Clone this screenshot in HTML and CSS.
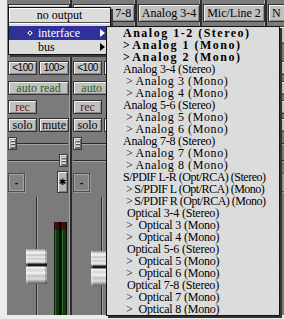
FILE: index.html
```html
<!DOCTYPE html>
<html>
<head>
<meta charset="utf-8">
<link rel="stylesheet" href="styles.css">
</head>
<body>
<div class="screen">
  <div class="mixer">
    <div class="strip">
      <div class="btn io"></div>
      <div class="btn io out"></div>
      <div class="pair"><div class="btn sm">&lt;100</div><div class="btn sm r">100&gt;</div></div>
      <div class="btn auto">auto read</div>
      <div class="btn rec">rec</div>
      <div class="pair p2"><div class="btn">solo</div><div class="btn r">mute</div></div>
      <div class="pan"><span class="knob"></span><span class="track"></span></div>
      <div class="pan pan2"><span class="track"></span><span class="knob"></span></div>
      <div class="ctl"><div class="inset">-</div><div class="star">✱</div></div>
      <div class="fader"><div class="fcol"><div class="fknob"></div></div><div class="meters"><i></i><i></i></div></div>
    </div>
    <div class="strip">
      <div class="btn io">Analog 7-8</div>
      <div class="btn io out"></div>
      <div class="pair"><div class="btn sm">&lt;100</div><div class="btn sm r"></div></div>
      <div class="btn auto">auto read</div>
      <div class="btn rec">rec</div>
      <div class="pair p2"><div class="btn">solo</div><div class="btn r"></div></div>
      <div class="pan"><span class="knob"></span><span class="track"></span></div>
      <div class="pan pan2"><span class="track"></span><span class="knob"></span></div>
      <div class="ctl"><div class="inset">-</div><div class="star"></div></div>
      <div class="fader"><div class="fcol"><div class="fknob k2"></div></div><div class="meters"><i></i><i></i></div></div>
    </div>
    <div class="strip">
      <div class="btn io">Analog 3-4</div>
      <div class="btn io out"></div>
      <div class="pair"><div class="btn sm"></div><div class="btn sm r"></div></div>
      <div class="btn auto"></div>
      <div class="btn rec"></div>
      <div class="pair p2"><div class="btn"></div><div class="btn r"></div></div>
      <div class="pan"><span class="knob"></span><span class="track"></span></div>
      <div class="pan pan2"><span class="track"></span><span class="knob"></span></div>
      <div class="ctl"><div class="inset"></div><div class="star"></div></div>
      <div class="fader"><div class="fcol"><div class="fknob"></div></div><div class="meters"><i></i><i></i></div></div>
    </div>
    <div class="strip">
      <div class="btn io">Mic/Line 2</div>
      <div class="btn io out"></div>
      <div class="pair"><div class="btn sm"></div><div class="btn sm r"></div></div>
      <div class="btn auto"></div>
      <div class="btn rec"></div>
      <div class="pair p2"><div class="btn"></div><div class="btn r"></div></div>
      <div class="pan"><span class="knob"></span><span class="track"></span></div>
      <div class="pan pan2"><span class="track"></span><span class="knob"></span></div>
      <div class="ctl"><div class="inset"></div><div class="star"></div></div>
      <div class="fader"><div class="fcol"><div class="fknob"></div></div><div class="meters"><i></i><i></i></div></div>
    </div>
    <div class="strip">
      <div class="btn io left">N</div>
      <div class="btn io out"></div>
      <div class="pair"><div class="btn sm"></div><div class="btn sm r"></div></div>
      <div class="btn auto"></div>
      <div class="btn rec"></div>
      <div class="pair p2"><div class="btn"></div><div class="btn r"></div></div>
      <div class="pan"><span class="knob"></span><span class="track"></span></div>
      <div class="pan pan2"><span class="track"></span><span class="knob"></span></div>
      <div class="ctl"><div class="inset"></div><div class="star"></div></div>
      <div class="fader"><div class="fcol"><div class="fknob"></div></div><div class="meters"><i></i><i></i></div></div>
    </div>
  </div>

  <div class="menu">
    <div class="menu-top">no output</div>
    <div class="menu-sep"></div>
    <div class="row hl"><span class="bullet"></span>interface<span class="arrow"></span></div>
    <div class="row"><span class="bullet none"></span>bus<span class="arrow"></span></div>
  </div>

  <div class="sub">
    <div class="it b">Analog 1-2 (Stereo)</div>
    <div class="it b m"><span class="gt">&gt;</span>Analog 1 (Mono)</div>
    <div class="it b m"><span class="gt">&gt;</span>Analog 2 (Mono)</div>
    <div class="it">Analog 3-4 (Stereo)</div>
    <div class="it m am"><span class="gt">&gt;</span>Analog 3 (Mono)</div>
    <div class="it m am"><span class="gt">&gt;</span>Analog 4 (Mono)</div>
    <div class="it">Analog 5-6 (Stereo)</div>
    <div class="it m am"><span class="gt">&gt;</span>Analog 5 (Mono)</div>
    <div class="it m am"><span class="gt">&gt;</span>Analog 6 (Mono)</div>
    <div class="it">Analog 7-8 (Stereo)</div>
    <div class="it m am"><span class="gt">&gt;</span>Analog 7 (Mono)</div>
    <div class="it m am"><span class="gt">&gt;</span>Analog 8 (Mono)</div>
    <div class="it sp">S/PDIF L-R (Opt/RCA) (Stereo)</div>
    <div class="it m sp"><span class="gt">&gt;</span>S/PDIF L (Opt/RCA) (Mono)</div>
    <div class="it m sp"><span class="gt">&gt;</span>S/PDIF R (Opt/RCA) (Mono)</div>
    <div class="it o">Optical 3-4 (Stereo)</div>
    <div class="it m o"><span class="gt">&gt;</span>Optical 3 (Mono)</div>
    <div class="it m o"><span class="gt">&gt;</span>Optical 4 (Mono)</div>
    <div class="it o">Optical 5-6 (Stereo)</div>
    <div class="it m o"><span class="gt">&gt;</span>Optical 5 (Mono)</div>
    <div class="it m o"><span class="gt">&gt;</span>Optical 6 (Mono)</div>
    <div class="it o">Optical 7-8 (Stereo)</div>
    <div class="it m o"><span class="gt">&gt;</span>Optical 7 (Mono)</div>
    <div class="it m o"><span class="gt">&gt;</span>Optical 8 (Mono)</div>
  </div>
</div>
</body>
</html>
```

FILE: styles.css
```css
html, body {
  margin: 0;
  padding: 0;
  background: #ececec;
}

.screen {
  position: relative;
  width: 284px;
  height: 319px;
  overflow: hidden;
  background: #ececec;
}

.mixer {
  display: flex;
  margin-left: 7px;
  width: 277px;
  height: 315px;
  overflow: hidden;
  background: #7b7b7b;
}

.strip {
  flex: 0 0 65px;
  box-sizing: border-box;
  padding: 4px 0 0 1px;
  border-right: 2px solid #2b2b2b;
  box-shadow: inset -1px 0 #a6a6a6;
  display: flex;
  flex-direction: column;
}

.btn {
  box-sizing: border-box;
  flex: 0 0 auto;
  height: 14px;
  width: 61px;
  background: #c0c0c0;
  border: 1px solid #333;
  box-shadow: inset 1px 1px #f2f2f2, inset -1px -1px #8a8a8a;
  display: flex;
  align-items: center;
  justify-content: center;
  font: 12px/1 "Liberation Serif", serif;
  color: #000;
  white-space: nowrap;
  overflow: hidden;
}

.io {
  height: 18px;
  width: 62px;
}

.io.left {
  justify-content: flex-start;
  padding-left: 3px;
}

.out {
  margin-top: 4px;
}

.pair {
  display: flex;
  gap: 2px;
  margin-top: 17px;
}

.pair .btn {
  width: 29px;
}

.pair .btn.r {
  width: 30px;
}

.pair.p2 {
  margin-top: 4px;
}

.sm {
  font: 10px/1 "Liberation Sans", sans-serif;
  letter-spacing: -0.5px;
}

.auto {
  margin-top: 6px;
  color: #1d5e1d;
}

.rec {
  margin-top: 5px;
  width: 29px;
  color: #5e1a1a;
}

.pan {
  display: flex;
  align-items: center;
  height: 14px;
  margin-top: 4px;
  padding-right: 2px;
}

.pan.pan2 {
  margin-top: 3px;
}

.knob {
  flex: 0 0 9px;
  height: 13px;
  box-sizing: border-box;
  border: 1px solid #3c3c3c;
  background:
    repeating-linear-gradient(to bottom, #e6e6e6 0 1px, #5c5c5c 1px 2px, transparent 2px 3px) 2px 2px / 4px 8px no-repeat,
    #ababab;
  box-shadow: inset 1px 1px #e4e4e4, inset -1px -1px #6a6a6a;
}

.track {
  flex: 1;
  height: 1px;
  background: #2a2a2a;
  box-shadow: 0 1px #a4a4a4;
}

.ctl {
  display: flex;
  justify-content: space-between;
  align-items: flex-start;
  height: 22px;
  margin-top: 4px;
  padding-right: 2px;
}

.inset {
  box-sizing: border-box;
  width: 17px;
  height: 19px;
  margin-top: 2px;
  border: 1px solid #4c4c4c;
  box-shadow: inset 1px 1px #a4a4a4, inset -1px -1px #a4a4a4, 1px 1px #999;
  background: #828282;
  display: flex;
  align-items: center;
  justify-content: center;
  font: bold 11px/1 "Liberation Sans", sans-serif;
  color: #111;
}

.star {
  box-sizing: border-box;
  width: 11px;
  height: 22px;
  border: 1px solid #3a3a3a;
  background: #b6b6b6;
  box-shadow: inset 1px 1px #eeeeee, inset -1px -1px #808080;
  display: flex;
  align-items: center;
  justify-content: center;
  font: 9px/1 "DejaVu Sans", sans-serif;
  color: #000;
}

.fader {
  flex: 1;
  display: flex;
}

.fcol {
  position: relative;
  width: 46px;
}

.fcol::before {
  content: "";
  position: absolute;
  left: 28px;
  top: 4px;
  bottom: 0;
  width: 1px;
  background: #2e2e2e;
  box-shadow: 1px 0 #9e9e9e;
}

.fknob {
  position: absolute;
  left: 18px;
  top: 56px;
  width: 21px;
  height: 35px;
  background: linear-gradient(to bottom,
    #8c8c8c 0, #d6d6d6 2px, #f8f8f8 4px, #c0c0c0 6px, #ececec 8px,
    #c8c8c8 10px, #f0f0f0 12px, #b4b4b4 14px, #1a1a1a 15px, #1a1a1a 17px,
    #f8f8f8 18px, #d4d4d4 21px, #f2f2f2 24px, #c2c2c2 27px, #dedede 30px,
    #8e8e8e 33px, #5e5e5e 35px);
  box-shadow: inset -2px 0 rgba(0, 0, 0, 0.22), inset 2px 0 rgba(255, 255, 255, 0.25);
}

.fknob.k2 {
  top: 58px;
}

.meters {
  display: flex;
  gap: 1px;
  margin-top: 29px;
  background: #000;
}

.meters i {
  display: block;
  position: relative;
  width: 6px;
  background: linear-gradient(to right, #062006 0 1px, #247024 1px 2px, #0b3a0b 2px 5px, #031003 5px 6px);
}

.meters i::before {
  content: "";
  position: absolute;
  left: 0;
  right: 0;
  top: 0;
  height: 8px;
  background: linear-gradient(to right, #200404 0 1px, #5a1414 1px 2px, #3e0c0c 2px 5px, #100202 5px 6px);
}

/* popup menu */
.menu {
  position: absolute;
  left: 8px;
  top: 7px;
  width: 103px;
  height: 48px;
  box-sizing: border-box;
  border: 1px solid #111;
  background: #dcdcdc;
  box-shadow: 2px 2px 0 #3a3a3a;
  font: 12px/1 "Liberation Serif", serif;
  color: #000;
}

.menu-top {
  height: 14px;
  line-height: 14px;
  text-align: center;
  border-bottom: 1px solid #505050;
  box-shadow: inset 1px 1px #ffffff;
}

.menu-sep {
  height: 3px;
  box-sizing: border-box;
  border-top: 1px solid #ffffff;
}

.row {
  display: flex;
  align-items: center;
  height: 14px;
  padding-left: 17px;
  white-space: nowrap;
}

.row.hl {
  background: #30309a;
  color: #fff;
}

.bullet {
  flex: 0 0 auto;
  width: 2px;
  height: 2px;
  border: 1px solid #fff;
  background: #10104a;
  transform: rotate(45deg);
  margin: 0 6px 0 2px;
}

.bullet.none {
  visibility: hidden;
}

.arrow {
  margin-left: auto;
  margin-right: 5px;
  width: 0;
  height: 0;
  border-top: 4px solid transparent;
  border-bottom: 4px solid transparent;
  border-left: 5px solid #000;
}

.row.hl .arrow {
  border-left-color: #fff;
}

/* sub menu */
.sub {
  position: absolute;
  left: 106px;
  top: 26px;
  width: 174px;
  height: 290px;
  box-sizing: border-box;
  border: 1px solid #111;
  background:
    repeating-linear-gradient(45deg, rgba(255, 255, 255, 0.18) 0 1px, transparent 1px 3px),
    #dadada;
  box-shadow: 2px 2px 0 #333;
  font: 12px/12px "Liberation Serif", serif;
  color: #000;
}

.it {
  height: 12px;
  line-height: 12px;
  padding-left: 16px;
  white-space: nowrap;
  letter-spacing: -0.2px;
}

.it.b {
  font-weight: bold;
  letter-spacing: 1.5px;
}

.it.am {
  letter-spacing: 0.6px;
}

.it.sp {
  letter-spacing: -0.5px;
}

.gt {
  display: inline-block;
  margin: 0 2px 0 3px;
}

.it.b .gt {
  margin: 0 1px 0 0;
}

.it.o {
  padding-left: 20px;
}

.it.m.o {
  padding-left: 16px;
}

.it.m.o .gt {
  margin-right: 6px;
}
```
